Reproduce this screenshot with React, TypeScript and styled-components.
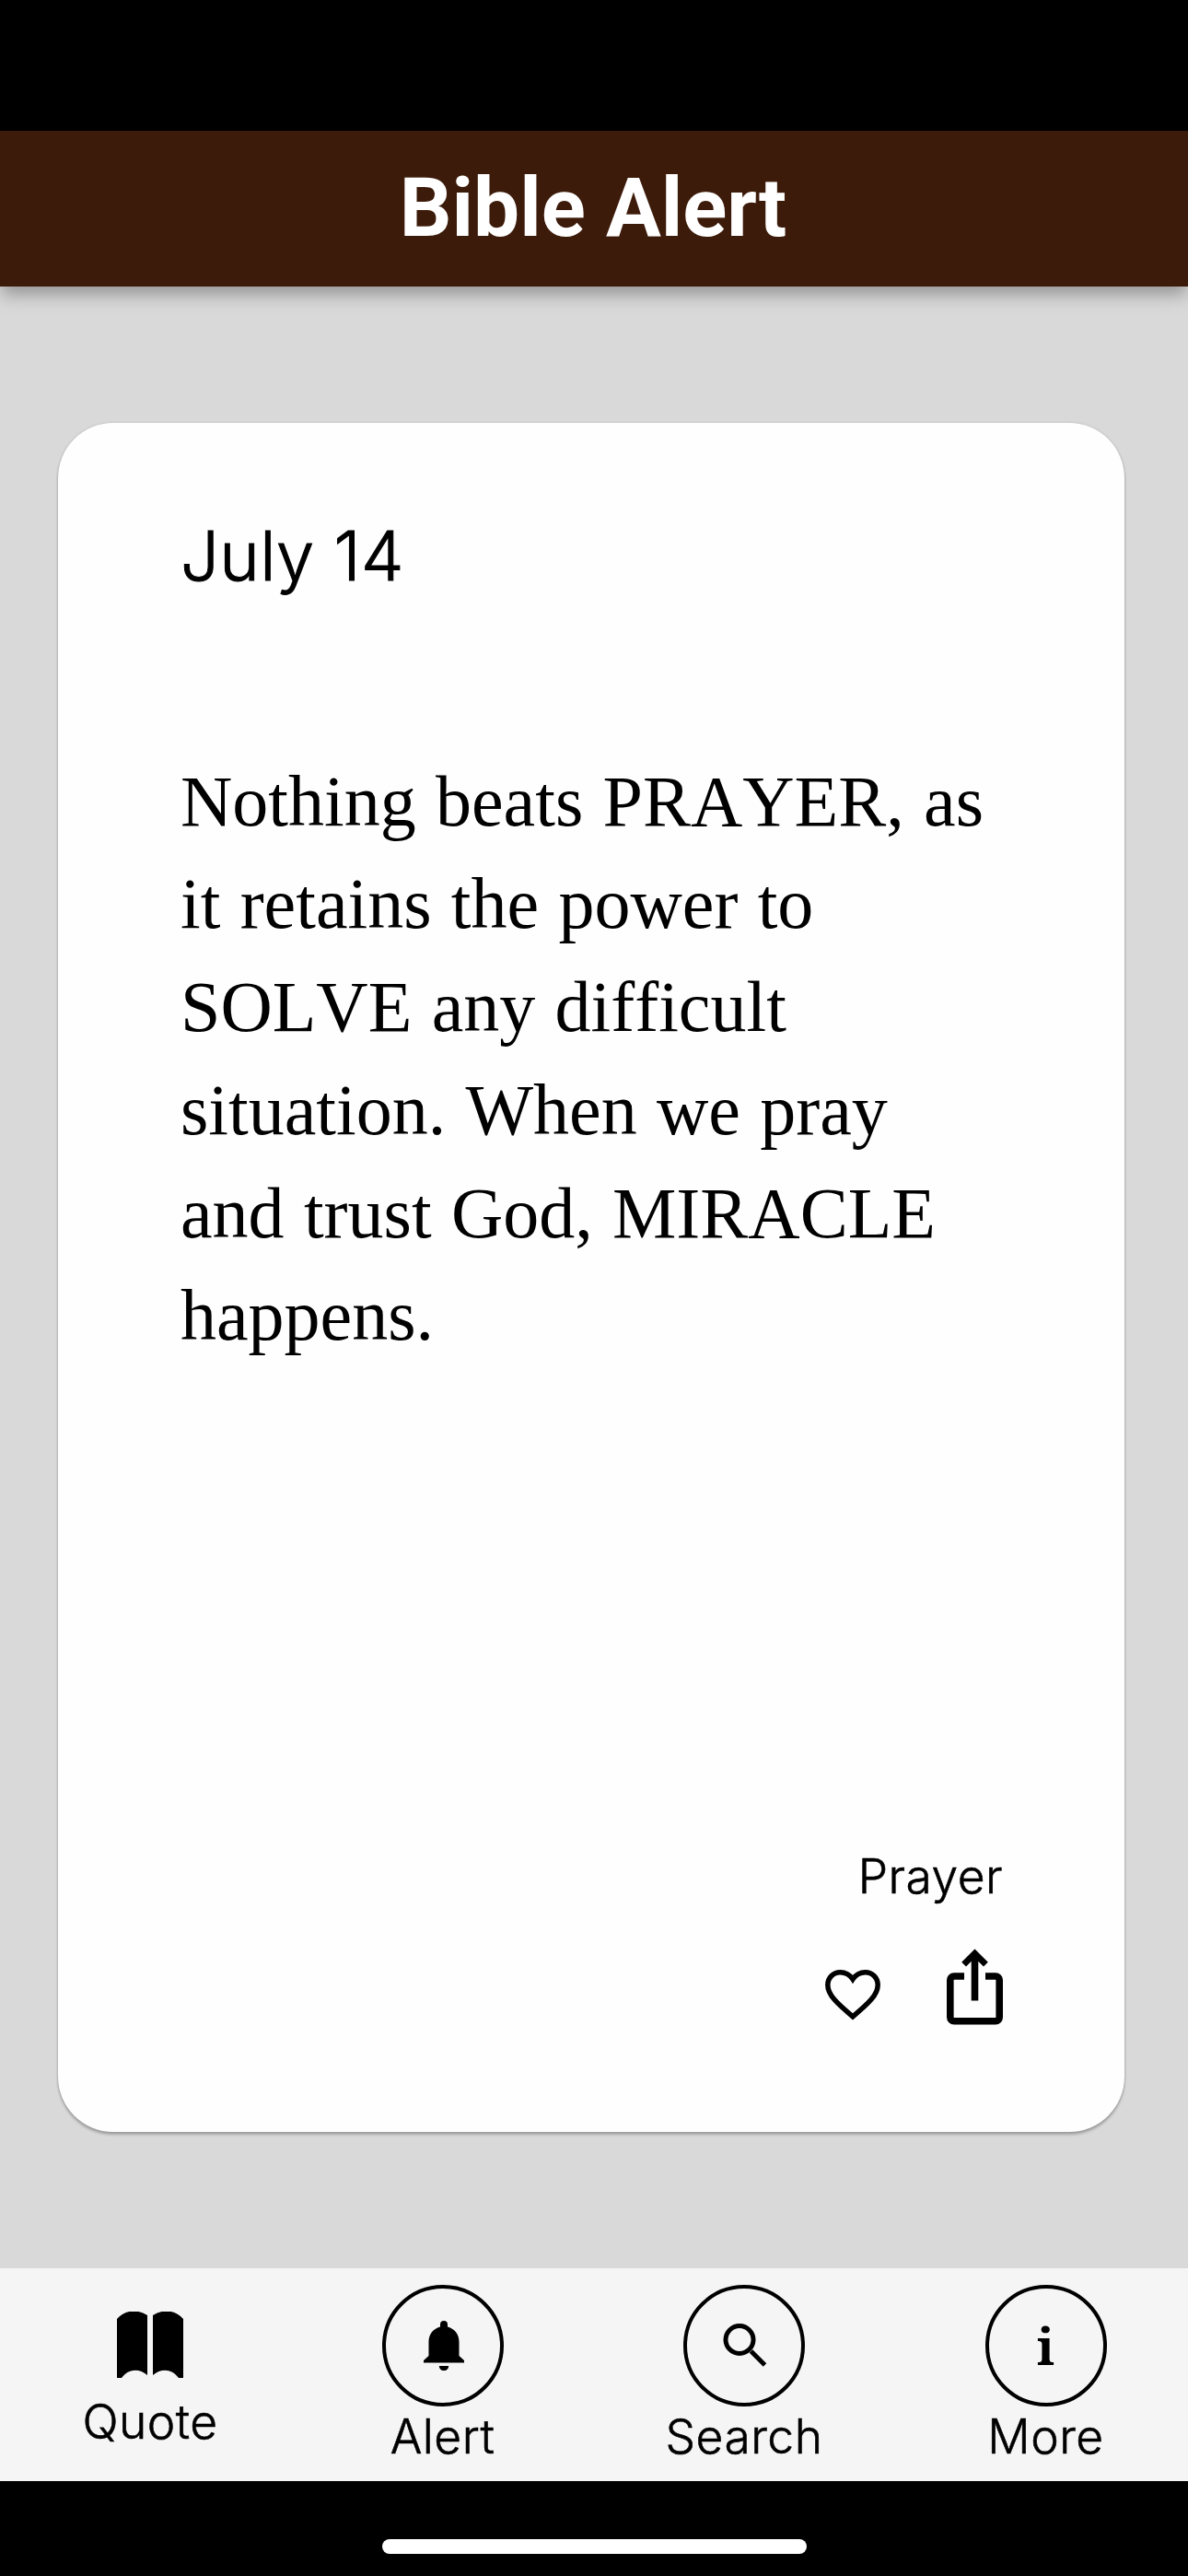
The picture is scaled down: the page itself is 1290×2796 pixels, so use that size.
import React from "react";
import styled, { createGlobalStyle } from "styled-components";

const GlobalStyle = createGlobalStyle`
  * { box-sizing: border-box; }
  body { margin: 0; background: #000; }
`;

const Screen = styled.div`
  display: flex;
  flex-direction: column;
  width: 1290px;
  height: 2796px;
  overflow: hidden;
  background: #000;
  color: #000;
  font-family: Inter, "Noto Sans", sans-serif;
`;

const StatusArea = styled.div`
  flex: none;
  height: 142px;
`;

const Header = styled.header`
  position: relative;
  z-index: 1;
  flex: none;
  height: 169px;
  padding: 32px 2px 0 0;
  background: #3d1b0a;
  box-shadow: 0 12px 14px -3px rgba(0, 0, 0, 0.2), 0 6px 27px rgba(0, 0, 0, 0.14);
  text-align: center;
`;

const Title = styled.h1`
  margin: 0;
  color: #fff;
  font: 700 89px/104px Roboto, sans-serif;
`;

const Main = styled.main`
  flex: 1;
  padding: 147.5px 69px 147.5px 63px;
  background: #d9d9d9;
`;

const Card = styled.article`
  display: flex;
  flex-direction: column;
  height: 1855px;
  padding: 99px 132px 0 133px;
  border-radius: 60px;
  background: #fefefe;
  box-shadow: 0 3px 3px rgba(0, 0, 0, 0.24), 0 0 3px rgba(0, 0, 0, 0.16);
`;

const DateLine = styled.time`
  font-size: 74px;
  font-weight: 300;
  line-height: 90px;
  letter-spacing: 0.3px;
  -webkit-text-stroke: 1px #000;
`;

const Quote = styled.p`
  width: 900px;
  margin: 166px 0 0;
  font: 400 78px/111.8px "Liberation Serif", serif;
  font-kerning: none;
  word-spacing: 1.8px;
  white-space: pre-line;
`;

const CardFooter = styled.footer`
  display: flex;
  flex-direction: column;
  align-items: flex-end;
  margin-top: auto;
  padding-bottom: 116px;
`;

const Category = styled.div`
  font-size: 51.5px;
  font-weight: 300;
  line-height: 62px;
  letter-spacing: 0.5px;
  -webkit-text-stroke: 0.6px #000;
`;

const Actions = styled.div`
  display: flex;
  align-items: flex-end;
  gap: 72px;
  margin-top: 48px;
  svg { display: block; }
`;

const IconButton = styled.button<{ $lift?: number }>`
  margin: 0 0 ${(p) => p.$lift ?? 0}px;
  padding: 0;
  border: 0;
  background: none;
`;

const Nav = styled.nav`
  display: flex;
  flex: none;
  height: 231.5px;
  background: #f5f5f5;
`;

const Tab = styled.a<{ $width: number; $top: number }>`
  display: flex;
  flex: none;
  flex-direction: column;
  align-items: center;
  width: ${(p) => p.$width}px;
  padding-top: ${(p) => p.$top}px;
`;

const Ring = styled.span<{ $nudge?: number }>`
  display: grid;
  place-items: center;
  width: 132px;
  height: 132px;
  padding-left: ${(p) => p.$nudge ?? 0}px;
  border: 4.5px solid #000;
  border-radius: 50%;
`;

const TabLabel = styled.span<{ $gap: number }>`
  margin-top: ${(p) => p.$gap}px;
  font-size: 51.5px;
  font-weight: 300;
  line-height: 62px;
  letter-spacing: 0.5px;
  -webkit-text-stroke: 0.6px #000;
`;

const InfoMark = styled.span`
  font: 700 54px/60px "Noto Serif", "Liberation Serif", serif;
`;

const HomeArea = styled.div`
  display: flex;
  flex: none;
  justify-content: center;
  height: 103px;
  padding-top: 63px;
`;

const HomeIndicator = styled.div`
  width: 461px;
  height: 16px;
  border-radius: 8px;
  background: #fff;
`;

const HeartIcon = () => (
  <svg width="60" height="55" viewBox="0 0 60 55" fill="none" stroke="#000" strokeWidth="5.5">
    <path d="M30 50.8C13 36.5 2.8 27.2 2.8 16.4C2.8 8.7 8.7 2.8 16.4 2.8C21.500 2.800 26.400 5.100 30 10.300C33.600 5.100 38.500 2.800 43.600 2.800C51.300 2.800 57.200 8.700 57.200 16.400C57.200 27.200 47 36.500 30 50.800Z" />
  </svg>
);

const ShareIcon = () => (
  <svg width="61" height="83" viewBox="0 0 61 83" fill="none" stroke="#000" strokeWidth="7.6">
    <path d="M19 30H8a4.2 4.2 0 0 0-4.2 4.2V74.500a4.200 4.200 0 0 0 4.200 4.200H53a4.200 4.200 0 0 0 4.200-4.200V34.200A4.200 4.200 0 0 0 53 30H42" />
    <path d="M30.500 56.500V6" />
    <path d="M18.600 17.200L30.500 5.300L42.400 17.200" strokeWidth="6.800" />
  </svg>
);

const BookIcon = () => (
  <svg width="72" height="72" viewBox="0 0 72 72">
    <path d="M0 8C9-2 22-3 33 4V69C24 61 12 62 5 72H0Z" />
    <path d="M72 8C63-2 50-3 39 4V69C48 61 60 62 67 72H72Z" />
  </svg>
);

const BellIcon = () => (
  <svg width="44" height="54" viewBox="0 0 44 54">
    <path d="M22 0a4 4 0 0 1 4 4V6.500C34 8.700 38.500 15 38.500 23V38L44 43V45.500H0V43L5.500 38V23C5.500 15 10 8.700 18 6.500V4A4 4 0 0 1 22 0Z" />
    <path d="M16.800 49H27.200A5.200 5.200 0 0 1 16.800 49Z" />
  </svg>
);

const SearchIcon = () => (
  <svg width="48" height="48" viewBox="0 0 48 48" fill="none" stroke="#000" strokeWidth="5">
    <circle cx="18" cy="17.500" r="15" />
    <path d="M30.500 30L45.500 45" />
  </svg>
);

export default function App() {
  return (
    <Screen>
      <GlobalStyle />
      <StatusArea />
      <Header>
        <Title>Bible Alert</Title>
      </Header>
      <Main>
        <Card>
          <DateLine>July 14</DateLine>
          <Quote>
            {"Nothing beats PRAYER, as\nit retains the power to\nSOLVE any difficult\nsituation. When we pray\nand trust God, MIRACLE\nhappens."}
          </Quote>
          <CardFooter>
            <Category>Prayer</Category>
            <Actions>
              <IconButton $lift={5} aria-label="Like">
                <HeartIcon />
              </IconButton>
              <IconButton aria-label="Share">
                <ShareIcon />
              </IconButton>
            </Actions>
          </CardFooter>
        </Card>
      </Main>
      <Nav>
        <Tab $width={326} $top={47.5}>
          <BookIcon />
          <TabLabel $gap={16}>Quote</TabLabel>
        </Tab>
        <Tab $width={309} $top={18}>
          <Ring $nudge={3}>
            <BellIcon />
          </Ring>
          <TabLabel $gap={1}>Alert</TabLabel>
        </Tab>
        <Tab $width={346} $top={18}>
          <Ring $nudge={2}>
            <SearchIcon />
          </Ring>
          <TabLabel $gap={1}>Search</TabLabel>
        </Tab>
        <Tab $width={309} $top={18}>
          <Ring>
            <InfoMark>i</InfoMark>
          </Ring>
          <TabLabel $gap={1}>More</TabLabel>
        </Tab>
      </Nav>
      <HomeArea>
        <HomeIndicator />
      </HomeArea>
    </Screen>
  );
}
